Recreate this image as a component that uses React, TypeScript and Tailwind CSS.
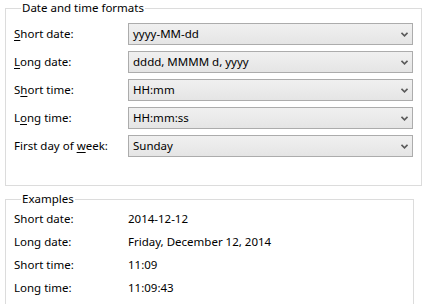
const formats = [
  { pre: '', key: 'S', post: 'hort date:', value: 'yyyy-MM-dd' },
  { pre: '', key: 'L', post: 'ong date:', value: 'dddd, MMMM d, yyyy' },
  { pre: 'S', key: 'h', post: 'ort time:', value: 'HH:mm' },
  { pre: 'L', key: 'o', post: 'ng time:', value: 'HH:mm:ss' },
  { pre: 'First day of ', key: 'w', post: 'eek:', value: 'Sunday' },
];

const examples = [
  { label: 'Short date:', value: '2014-12-12' },
  { label: 'Long date:', value: 'Friday, December 12, 2014' },
  { label: 'Short time:', value: '11:09' },
  { label: 'Long time:', value: '11:09:43' },
];

const Chevron = () => (
  <svg width="7" height="5" viewBox="0 0 7 5" className="shrink-0">
    <path d="M0.5 0.8 L3.5 3.8 L6.5 0.8" fill="none" stroke="#5a5a5a" strokeWidth="1.6" />
  </svg>
);

const App = () => {
  return (
    <div
      className="w-[425px] h-[304px] bg-white overflow-hidden text-[11.5px] leading-[16px] text-black pl-[5px]"
      style={{ fontFamily: '"Segoe UI", "Noto Sans", sans-serif' }}
    >
      <fieldset className="w-[417px] border border-[#dcdcdc] px-[8px] pb-[28px] pt-[7px]">
        <legend className="ml-[7px] px-[1px]">Date and time formats</legend>
        <div className="flex flex-col gap-[6px]">
          {formats.map((f) => (
            <div key={f.value} className="flex items-center h-[22px]">
              <div className="w-[114px]">
                {f.pre}
                <u className="underline-offset-2">{f.key}</u>
                {f.post}
              </div>
              <div className="flex items-center justify-between w-[285px] h-[22px] border border-[#acacac] bg-gradient-to-b from-[#f0f0f0] to-[#e5e5e5] pl-[4px] pr-[4px]">
                <span>{f.value}</span>
                <Chevron />
              </div>
            </div>
          ))}
        </div>
      </fieldset>
      <fieldset className="mt-[5px] w-[409px] h-[140px] border border-[#dcdcdc] px-[8px]">
        <legend className="ml-[7px] px-[1px]">Examples</legend>
        <div className="flex flex-col">
          {examples.map((e) => (
            <div key={e.label} className="flex items-center h-[23px]">
              <div className="w-[114px]">{e.label}</div>
              <div>{e.value}</div>
            </div>
          ))}
        </div>
      </fieldset>
    </div>
  );
};

export default App;
